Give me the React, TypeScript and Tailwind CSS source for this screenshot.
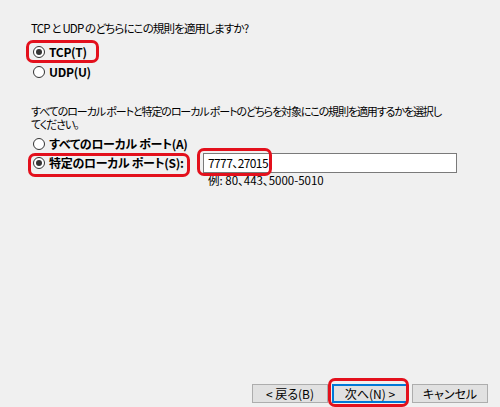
export default function App() {
  const font = "font-['Noto_Sans_CJK_JP','Noto_Sans',sans-serif] [font-feature-settings:'palt']";

  return (
    <div className={`relative w-[500px] h-[407px] bg-[#f0f0f0] text-black text-[12px] flex flex-col ${font}`}>
      <div className="pl-[31px] pt-[21px]">
        <p className="text-[11.5px] leading-[14px] tracking-[-0.85px] whitespace-nowrap">TCP と UDP のどちらにこの規則を適用しますか?</p>

        <div className="mt-[7px] flex flex-col">
          <Radio checked label="TCP(T)" />
          <Radio label="UDP(U)" />
        </div>

        <p className="mt-[23px] text-[11px] leading-[13px] tracking-[-1.1px] whitespace-nowrap">
          すべてのローカル ポートと特定のローカル ポートのどちらを対象にこの規則を適用するかを選択し
          <br />
          てください。
        </p>

        <div className="mt-[4px] flex flex-col">
          <div className="h-[18px] flex items-center">
            <Radio label="すべてのローカル ポート(A)" />
          </div>
          <div className="h-[20px] flex items-center">
            <div className="w-[172px] shrink-0">
              <Radio checked label="特定のローカル ポート(S):" />
            </div>
            <div className="w-[254px] h-[20px] bg-white border border-[#7a7a7a] flex items-center pl-[4px] leading-none tracking-[-0.6px] whitespace-nowrap">
              7777、27015
            </div>
          </div>
          <p className="ml-[177px] mt-[1px] leading-[12px] text-[11.5px] whitespace-nowrap">例: 80、443、5000-5010</p>
        </div>
      </div>

      <div className="mt-auto mb-[4px] mr-[12px] flex justify-end gap-[4px]">
        <button className="w-[76px] h-[19px] bg-[#e1e1e1] border border-[#adadad] leading-none">&lt; 戻る(B)</button>
        <button className="w-[76px] h-[19px] bg-[#e1e1e1] border-2 border-[#0078d7] leading-none">次へ(N) &gt;</button>
        <button className="w-[76px] h-[19px] bg-[#e1e1e1] border border-[#adadad] leading-none">キャンセル</button>
      </div>

      {/* red annotation rings */}
      <div className="absolute left-[26px] top-[40px] w-[73px] h-[23px] border-[3px] border-[#e3101c] rounded-[7px]" />
      <div className="absolute left-[28px] top-[153px] w-[162px] h-[24px] border-[3px] border-[#e3101c] rounded-[7px]" />
      <div className="absolute left-[197px] top-[148px] w-[75px] h-[28px] border-[3px] border-[#e3101c] rounded-[7px]" />
      <div className="absolute left-[328px] top-[378px] w-[81px] h-[29px] border-[3px] border-[#e3101c] rounded-[7px]" />
    </div>
  );
}

function Radio({ label, checked }: { label: string; checked?: boolean }) {
  return (
    <div className="h-[20px] flex items-center pl-[2px] gap-[4px]">
      <span className="w-[12px] h-[12px] rounded-full border border-[#333333] bg-white flex items-center justify-center shrink-0">
        {checked && <span className="w-[6px] h-[6px] rounded-full bg-[#333333]" />}
      </span>
      <span className="font-bold tracking-[-0.3px] whitespace-nowrap leading-none">{label}</span>
    </div>
  );
}
